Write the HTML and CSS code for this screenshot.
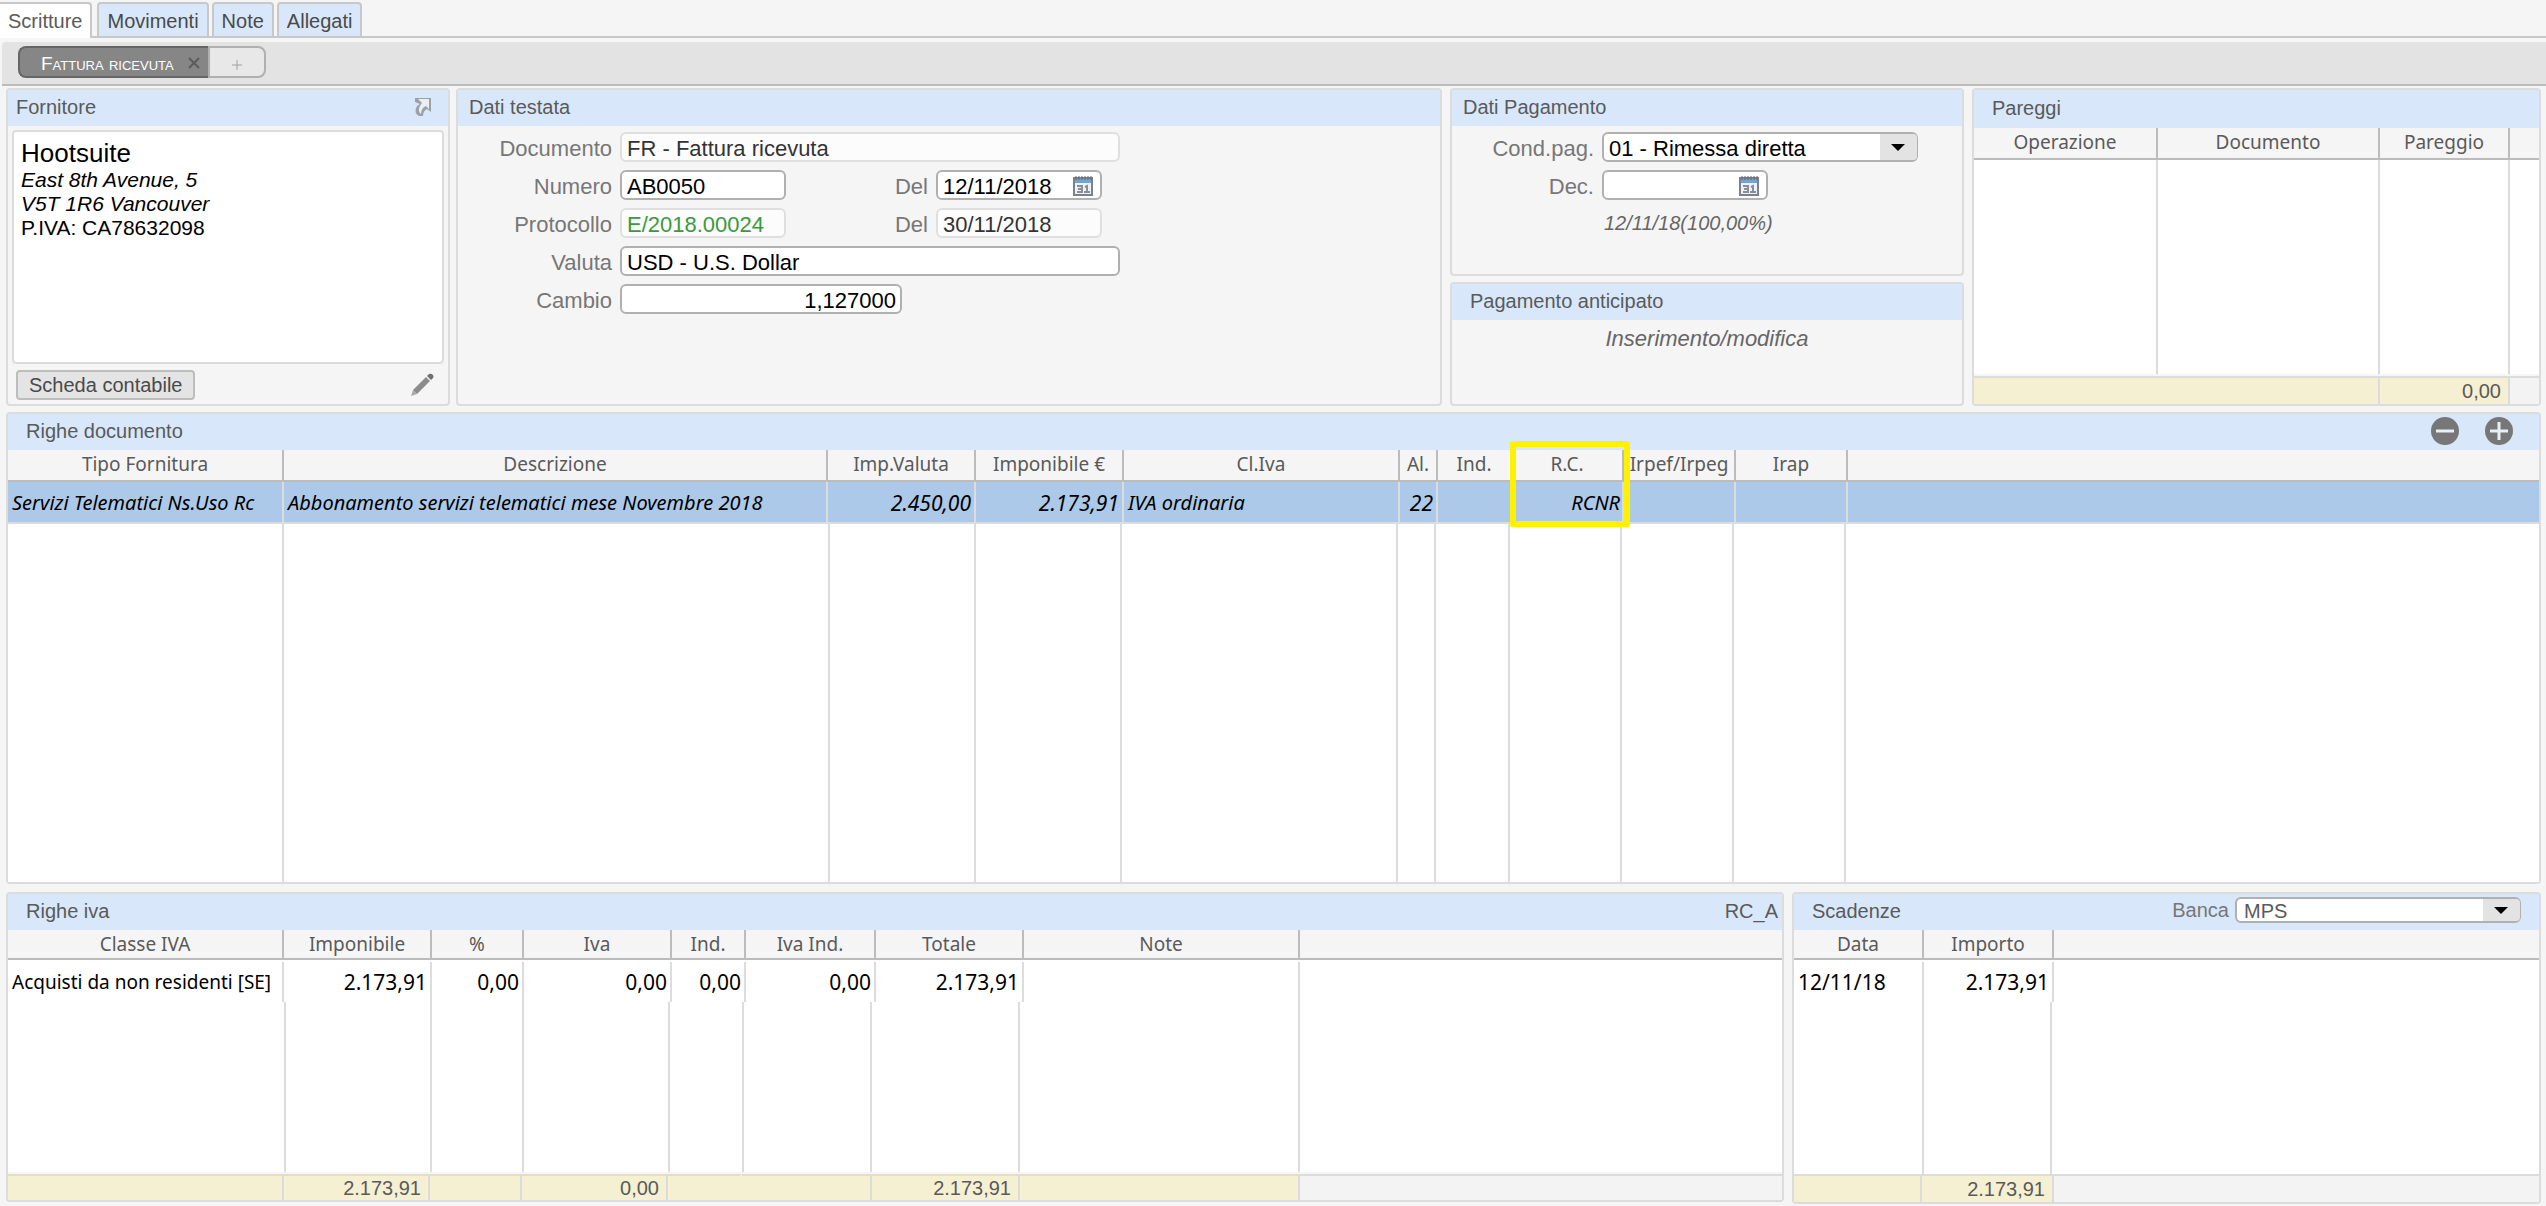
FILE: index.html
```html
<!DOCTYPE html>
<html lang="it">
<head>
<meta charset="utf-8">
<title>Fattura ricevuta</title>
<link rel="stylesheet" href="styles.css">
</head>
<body>
<nav class="tabs">
  <button type="button" class="tab tab-active">Scritture</button>
  <button type="button" class="tab">Movimenti</button>
  <button type="button" class="tab">Note</button>
  <button type="button" class="tab">Allegati</button>
</nav>
<div class="subtabs">
  <button type="button" class="subtab subtab-active"><span class="caps">Fattura ricevuta</span><svg class="close" viewBox="0 0 12 12"><path d="M1 1L11 11M11 1L1 11"/></svg></button>
  <button type="button" class="subtab subtab-add" aria-label="Aggiungi"><svg viewBox="0 0 12 12"><path d="M6 1V11M1 6H11"/></svg></button>
</div>
<main class="page">
  <div class="row-top">
    <section class="panel supplier">
      <header class="panel-head head-tight"><h2>Fornitore</h2>
        <svg class="goto" viewBox="0 0 18 20"><path class="edge" d="M1 1H17V15L13 12Q9 14 9 19H5Q0 16 2 11Q3 8 6 7L1 5Z"/><path class="face" d="M4 2H15V12L12 9Q7 11 7 17Q2 13 8 6Z"/></svg>
      </header>
      <div class="address">
        <p class="name">Hootsuite</p>
        <p><em>East 8th Avenue, 5</em></p>
        <p><em>V5T 1R6 Vancouver</em></p>
        <p>P.IVA: CA78632098</p>
      </div>
      <div class="supplier-foot">
        <button type="button" class="btn">Scheda contabile</button>
        <svg class="pencil" viewBox="0 0 24 24"><path class="tip" d="M1 23L3 17L7 21Z"/><path d="M3 17L16 4L20 8L7 21Z"/><path class="end" d="M17 3L19 1Q21 0 23 2Q24 4 23 5L21 7Z"/></svg>
      </div>
    </section>

    <section class="panel heading">
      <header class="panel-head"><h2>Dati testata</h2></header>
      <form class="form form-doc">
        <label for="doc">Documento</label><input id="doc" class="field wide" readonly value="FR - Fattura ricevuta">
        <label for="num">Numero</label><input id="num" class="field" value="AB0050">
        <label for="del1">Del</label><span class="date"><input id="del1" class="field" value="12/11/2018"><svg class="cal" viewBox="0 0 20 20"><use href="#cal"/></svg></span>
        <label for="prot">Protocollo</label><input id="prot" class="field green" readonly value="E/2018.00024">
        <label for="del2">Del</label><input id="del2" class="field" readonly value="30/11/2018">
        <label for="val">Valuta</label><input id="val" class="field wide" value="USD - U.S. Dollar">
        <label for="cam">Cambio</label><input id="cam" class="field mid" value="1,127000">
      </form>
    </section>

    <div class="stack">
      <section class="panel payment">
        <header class="panel-head"><h2>Dati Pagamento</h2></header>
        <form class="form form-pay">
          <label for="cond">Cond.pag.</label><span class="select"><select id="cond" class="field"><option>01 - Rimessa diretta</option></select></span>
          <label for="dec">Dec.</label><span class="date"><input id="dec" class="field" value=""><svg class="cal" viewBox="0 0 20 20"><use href="#cal"/></svg></span>
          <p class="due">12/11/18(100,00%)</p>
        </form>
      </section>
      <section class="panel advance">
        <header class="panel-head head-wide"><h2>Pagamento anticipato</h2></header>
        <a href="#" class="edit">Inserimento/modifica</a>
      </section>
    </div>

    <section class="panel matches">
      <header class="panel-head head-wide"><h2>Pareggi</h2></header>
      <table class="grid">
        <thead><tr><th>Operazione</th><th>Documento</th><th>Pareggio</th><th></th></tr></thead>
        <tbody><tr class="filler"><td></td><td></td><td></td><td></td></tr></tbody>
        <tfoot><tr><td class="sum"></td><td class="sum num">0,00</td><td></td></tr></tfoot>
      </table>
    </section>
  </div>

  <section class="panel lines">
    <header class="panel-head head-wide"><h2>Righe documento</h2>
      <span class="tools">
        <button type="button" class="round" aria-label="Rimuovi riga"><svg viewBox="0 0 28 28"><circle cx="14" cy="14" r="14"/><path d="M5 14H23"/></svg></button>
        <button type="button" class="round" aria-label="Aggiungi riga"><svg viewBox="0 0 28 28"><circle cx="14" cy="14" r="14"/><path d="M5 14H23M14 5V23"/></svg></button>
      </span>
    </header>
    <table class="grid">
      <thead><tr><th>Tipo Fornitura</th><th>Descrizione</th><th>Imp.Valuta</th><th>Imponibile €</th><th>Cl.Iva</th><th>Al.</th><th>Ind.</th><th class="marked">R.C.<span class="marker"></span></th><th>Irpef/Irpeg</th><th>Irap</th><th></th></tr></thead>
      <tbody>
        <tr class="selected"><td>Servizi Telematici Ns.Uso Rc</td><td>Abbonamento servizi telematici mese Novembre 2018</td><td class="num">2.450,00</td><td class="num">2.173,91</td><td>IVA ordinaria</td><td class="num">22</td><td></td><td class="code-cell">RCNR</td><td></td><td></td><td></td></tr>
        <tr class="filler"><td></td><td></td><td></td><td></td><td></td><td></td><td></td><td></td><td></td><td></td><td></td></tr>
      </tbody>
    </table>
  </section>

  <div class="row-bottom">
    <section class="panel vat">
      <header class="panel-head head-wide"><h2>Righe iva</h2><span class="code">RC_A</span></header>
      <table class="grid">
        <thead><tr><th>Classe IVA</th><th>Imponibile</th><th>%</th><th>Iva</th><th>Ind.</th><th>Iva Ind.</th><th>Totale</th><th>Note</th><th></th></tr></thead>
        <tbody>
          <tr class="data"><td>Acquisti da non residenti [SE]</td><td class="num">2.173,91</td><td class="num">0,00</td><td class="num">0,00</td><td class="num">0,00</td><td class="num">0,00</td><td class="num">2.173,91</td><td></td><td></td></tr>
          <tr class="filler"><td></td><td></td><td></td><td></td><td></td><td></td><td></td><td></td><td></td></tr>
        </tbody>
        <tfoot><tr><td class="sum"></td><td class="sum num">2.173,91</td><td class="sum"></td><td class="sum num">0,00</td><td class="sum"></td><td class="sum"></td><td class="sum num">2.173,91</td><td class="sum"></td><td></td></tr></tfoot>
      </table>
    </section>
    <section class="panel dues">
      <header class="panel-head head-wide"><h2>Scadenze</h2>
        <span class="bank"><label for="bank">Banca</label><span class="select"><select id="bank" class="field"><option>MPS</option></select></span></span>
      </header>
      <table class="grid">
        <thead><tr><th>Data</th><th>Importo</th><th></th></tr></thead>
        <tbody>
          <tr class="data"><td class="day">12/11/18</td><td class="num">2.173,91</td><td></td></tr>
          <tr class="filler"><td></td><td></td><td></td></tr>
        </tbody>
        <tfoot><tr><td class="sum"></td><td class="sum num">2.173,91</td><td></td></tr></tfoot>
      </table>
    </section>
  </div>
</main>
<svg class="defs" width="0" height="0">
  <symbol id="cal" viewBox="0 0 20 20">
    <rect x="1" y="2" width="18" height="17" fill="#eef1f7" stroke="#7d8189" stroke-width="2"/>
    <rect x="2" y="3" width="16" height="4" fill="#6fa5d0"/>
    <path d="M3 0V4M6 0V4M9 0V4M12 0V4M15 0V4M18 0V4" stroke="#5d6a78" stroke-width="1"/>
    <path d="M4 10H9V16H4M5 13H9M12 11L14 10V16M11 16H17" fill="none" stroke="#8a8e96" stroke-width="2"/>
  </symbol>
</svg>
</body>
</html>
```
FILE: styles.css
```css
* { box-sizing: border-box; }

body {
  margin: 0;
  min-height: 100vh;
  display: flex;
  flex-direction: column;
  background: #f5f5f5;
  color: #5a5a5a;
  font: 20px/24px "Liberation Sans", Arial, sans-serif;
}

h2, p { margin: 0; font-size: inherit; font-weight: normal; }
button, input, select { font: inherit; color: inherit; margin: 0; }
svg { display: block; }
.defs { position: absolute; }

/* Tabs */
.tabs {
  display: flex;
  align-items: stretch;
  height: 38px;
  padding-top: 2px;
  border-bottom: 2px solid #c8c8c8;
}
.tab {
  padding: 2px 8px 0;
  margin-right: 3px;
  border: 2px solid #c8c8c8;
  border-bottom: 0;
  border-radius: 4px 4px 0 0;
  background: #d8e8fa;
  color: #4a4a4a;
}
.tab-active {
  margin: 0 5px -2px 0;
  padding: 2px 8px;
  border-left: 0;
  border-radius: 0 4px 0 0;
  background: #fff;
  color: #5a5a5a;
}

.subtabs {
  display: flex;
  height: 44px;
  margin: 4px 0 2px 2px;
  padding: 4px 16px 6px;
  border-bottom: 2px solid #bcbcbc;
  border-radius: 4px 0 0 0;
  background: #e3e3e3;
}
.subtab { display: flex; align-items: center; height: 32px; border: 2px solid #b0b0b0; }
.subtab-active {
  gap: 14px;
  padding: 4px 8px 0 21px;
  border-color: #666;
  border-right: 0;
  border-radius: 8px 0 0 8px;
  background: #868686;
  color: #fff;
}
.caps { font-size: 19px; font-variant: small-caps; }
.close { width: 12px; height: 12px; margin-bottom: 2px; stroke: #5c5c5c; stroke-width: 2; }
.subtab-add { width: 58px; justify-content: center; border-radius: 0 8px 8px 0; background: #e8e8e8; }
.subtab-add svg { width: 12px; height: 12px; stroke: #a0a0a0; stroke-width: 1; margin-top: 6px; }

/* Panels */
.page { flex: 1; display: flex; flex-direction: column; gap: 6px; padding: 0 5px 2px 6px; }
.panel {
  display: flex;
  flex-direction: column;
  min-width: 0;
  border: 2px solid #dcdcdc;
  border-radius: 4px;
  background: #f5f5f5;
}
.panel-head {
  display: flex;
  align-items: center;
  justify-content: space-between;
  height: 36px;
  padding: 0 11px 2px;
  background: #d8e8fa;
}
.head-tight { padding: 0 16px 2px 8px; }
.head-wide { padding: 0 4px 2px 18px; }

.row-top {
  display: grid;
  grid-template-columns: 442px minmax(0, 1fr) 514px 569px;
  column-gap: 8px;
  height: 318px;
}
.supplier { margin-right: -2px; }

.goto { width: 18px; height: 20px; }
.goto .edge { fill: #9ca1a8; }
.goto .face { fill: #eceff2; }
.address {
  flex: 1;
  margin: 4px 4px 6px;
  padding: 6px 7px;
  border: 2px solid #dcdcdc;
  border-radius: 4px;
  background: #fff;
  color: #000;
  font-size: 21px;
}
.address .name { font-size: 26px; line-height: 30px; }
.supplier-foot { display: flex; align-items: center; justify-content: space-between; padding: 0 14px 4px 8px; }
.btn { height: 30px; padding: 0 11px; border: 2px solid #bdbdbd; border-radius: 4px; background: #e4e4e4; color: #4a4a4a; }
.pencil { width: 24px; height: 24px; fill: #8c8c8c; }
.pencil .tip { fill: #aaa; }
.pencil .end { fill: #6f6f6f; }

/* Forms */
.form { display: grid; align-content: start; gap: 8px; padding: 6px; font-size: 22px; color: #777; }
.form label { height: 30px; text-align: right; line-height: 34px; }
.form-doc { grid-template-columns: 148px 166px 134px 166px; }
.form-doc .wide { grid-column: 2 / 5; width: 500px; }
.form-doc .mid { width: 282px; grid-column: 2 / 5; text-align: right; padding-right: 4px; }
.form-pay { grid-template-columns: 136px 316px; }
.field {
  width: 100%;
  height: 30px;
  padding: 3px 5px 0;
  border: 2px solid #b0b0b0;
  border-radius: 6px;
  background: #fff;
  color: #000;
}
.field[readonly] { border-color: #dfdfdf; background: #fcfcfc; color: #333; }
.field.green { color: #3a9a3a; }
.date { position: relative; width: 166px; }
.date .cal { position: absolute; right: 9px; top: 6px; width: 20px; height: 20px; }
.select { position: relative; display: block; }
.select select { display: block; appearance: none; }
.select::before {
  content: "";
  position: absolute;
  top: 2px; right: 1px; bottom: 2px;
  width: 37px;
  border-radius: 0 4px 4px 0;
  background: #e3e3e3;
}
.select::after {
  content: "";
  position: absolute;
  top: 12px; right: 13px;
  border: solid transparent;
  border-width: 7px 7px 0;
  border-top-color: #000;
}
.due { grid-column: 2; padding: 3px 0 0 2px; font-size: 20px; font-style: italic; color: #666; }

.stack { display: flex; flex-direction: column; gap: 6px; }
.payment { height: 188px; }
.advance { flex: 1; }
.edit { align-self: center; margin-top: 7px; font-size: 22px; font-style: italic; color: #666; text-decoration: none; }

/* Tables: head, body and foot each have their own column widths */
.grid { flex: 1; display: flex; flex-direction: column; font: 20px/24px "Noto Sans", sans-serif; background: #fff; }
.grid tr { display: grid; grid-template-columns: var(--head); }
.grid thead { display: block; height: 32px; background: #f5f5f5; border-bottom: 2px solid #bcbcbc; }
.grid tbody { flex: 1; display: flex; flex-direction: column; }
.grid th { padding: 0; height: 30px; font-size: 19px; font-weight: normal; line-height: 28px; border-right: 2px solid #bcbcbc; white-space: nowrap; }
.grid td { padding: 0 4px; border-right: 2px solid #dcdcdc; white-space: nowrap; color: #000; }
.grid th:last-child, .grid td:last-child { border-right: 0; }
.grid .num { padding-right: 3px; text-align: right; font-size: 21px; }
.grid .code-cell { padding-right: 2px; text-align: right; }
.grid .filler { flex: 1; grid-template-columns: var(--body); }
.grid .selected { height: 42px; line-height: 42px; font-style: italic; background: #adc9e9; border-bottom: 2px solid #dcdcdc; }
.grid .data { height: 42px; padding-top: 2px; font-size: 19px; line-height: 40px; }
.grid .day { font-size: 21px; }
.grid tfoot { display: block; border-top: 2px solid #dcdcdc; background: #f3f3f3; }
.grid tfoot tr { height: 26px; grid-template-columns: var(--foot); font: 20px/26px "Liberation Sans", Arial, sans-serif; }
.grid tfoot td { color: #5a5a5a; }
.grid tfoot .num { padding-right: 7px; font-size: 20px; }
.grid .sum { background: #f5f0d2; }
.matches .filler, .vat .filler { border-bottom: 2px solid #f5f5f5; }

.matches .panel-head { height: 38px; }
.matches .grid { --head: 184px 222px 130px 1fr; --body: var(--head); --foot: 406px 130px 1fr; }
.lines { height: 472px; }
.lines .grid {
  --head: 276px 544px 148px 148px 276px 38px 74px 112px 112px 112px 1fr;
  --body: 276px 546px 146px 146px 276px 38px 74px 112px 112px 112px 1fr;
}
.tools { display: flex; gap: 26px; padding-right: 22px; }
.round { width: 28px; height: 28px; padding: 0; border: 0; background: none; }
.round svg { width: 28px; height: 28px; fill: #777; stroke: #e6effa; stroke-width: 3; }
.round circle { stroke: none; }
.marked { position: relative; }
.marker { position: absolute; z-index: 1; left: -2px; top: -9px; width: 120px; height: 86px; border: 6px solid #fff200; border-radius: 2px; }

.row-bottom { flex: 1; display: grid; grid-template-columns: minmax(0, 1fr) 749px; gap: 8px; margin-top: 2px; }
.vat { margin-bottom: 2px; }
.vat .grid {
  --head: 276px 148px 92px 148px 74px 130px 148px 276px 1fr;
  --body: 278px 146px 92px 146px 74px 128px 148px 280px 1fr;
  --foot: 276px 146px 92px 146px 74px 130px 148px 280px 1fr;
}
.vat thead, .dues thead { height: 30px; }
.vat th, .dues th { height: 28px; }
.vat tfoot tr { height: 24px; line-height: 24px; }
.vat .sum { border-top: 2px solid #e6dfbd; margin-top: -2px; }
.vat .sum:nth-child(5) { border-right-color: transparent; }
.dues .grid { --head: 130px 130px 1fr; --body: 130px 128px 1fr; --foot: 128px 132px 1fr; }
.bank { display: flex; align-items: center; gap: 6px; padding: 0 14px 2px 0; color: #777; }
.bank .select { width: 286px; }
.bank .field { height: 26px; padding: 0 7px; color: #5a5a5a; }
.bank .select::after { top: 10px; }
```
